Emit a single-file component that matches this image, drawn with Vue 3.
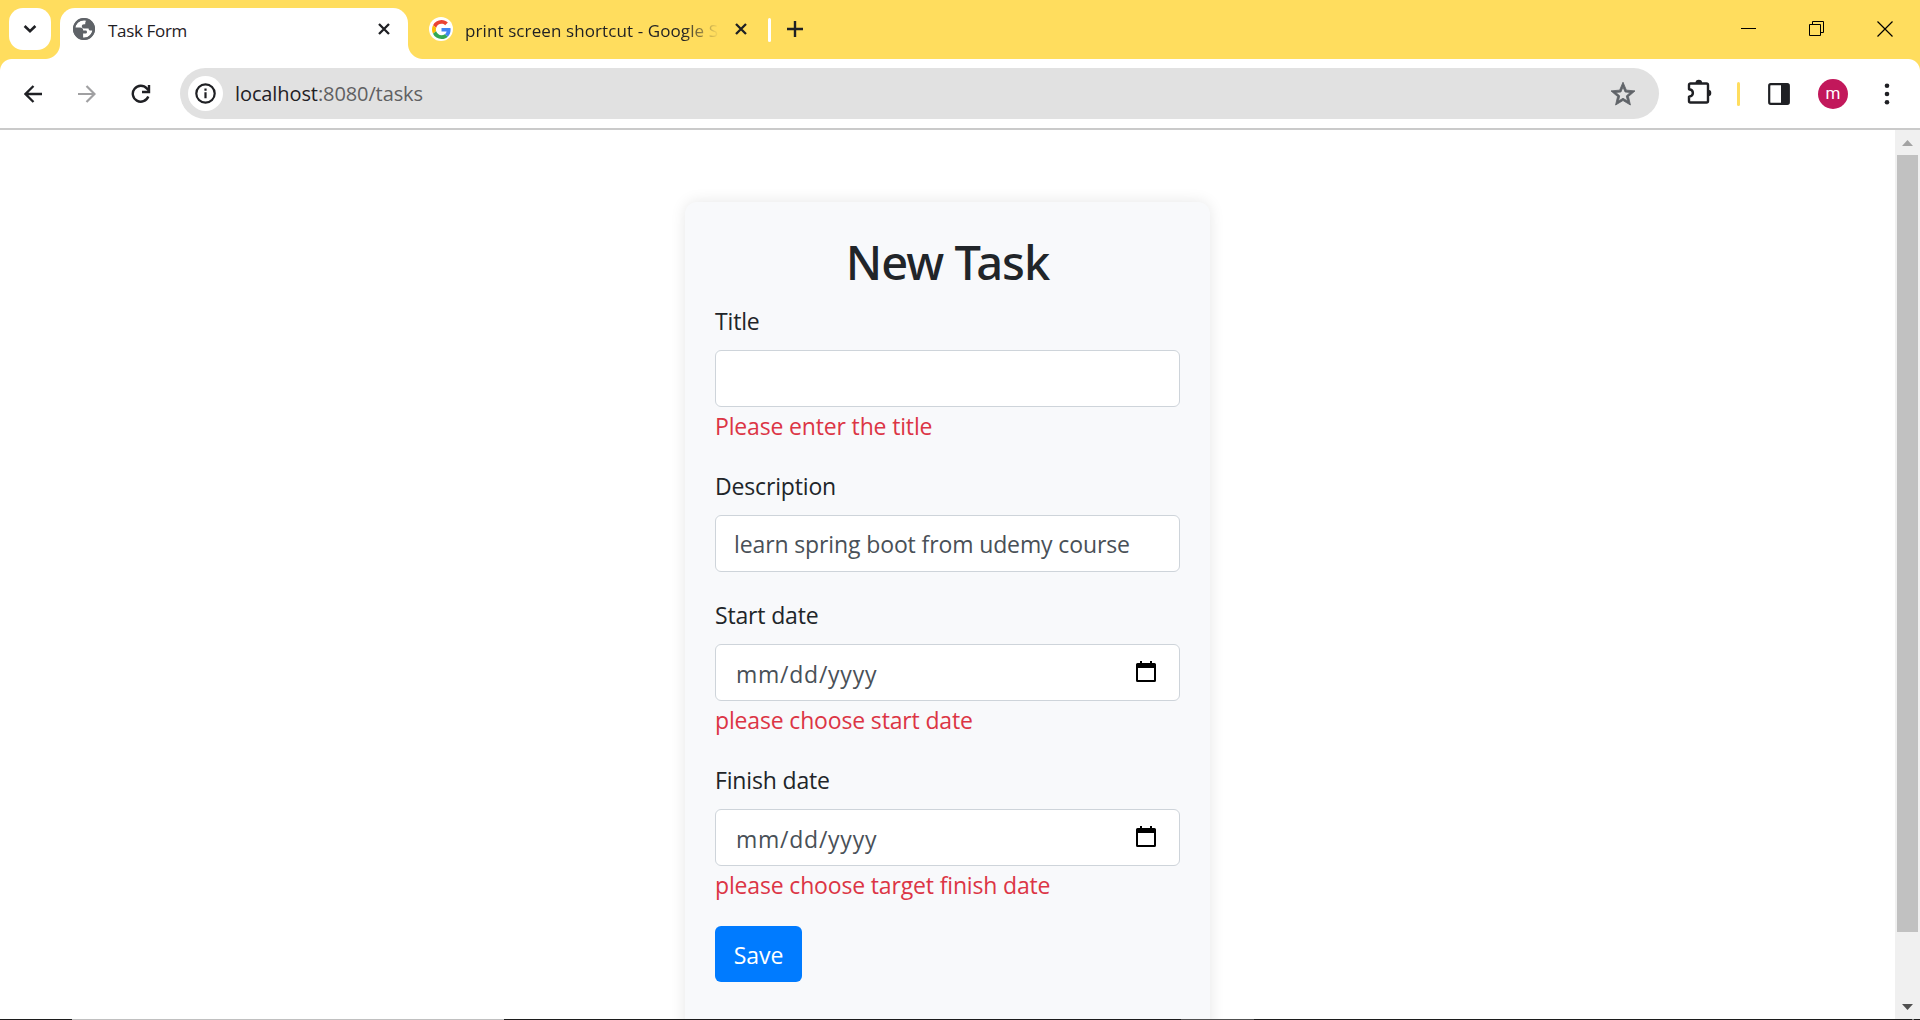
<script setup>
const fields = [
  { id: 'title', label: 'Title', value: '', error: 'Please enter the title' },
  { id: 'description', label: 'Description', value: 'learn spring boot from udemy course' },
  { id: 'start', label: 'Start date', date: true, error: 'please choose start date' },
  { id: 'finish', label: 'Finish date', date: true, error: 'please choose target finish date' },
]
</script>

<template>
  <div class="window">
    <header class="tabstrip">
      <button class="tab-search" aria-label="Search tabs">
        <svg width="14" height="10" viewBox="0 0 14 10"><path d="M1.6 2l5.4 5.2L12.4 2" fill="none" stroke="#1f2024" stroke-width="2.6" /></svg>
      </button>
      <div class="tab active">
        <svg class="globe" width="22" height="22" viewBox="0 0 22 22">
          <circle cx="11" cy="11" r="11" fill="#5f6368" />
          <path d="M12 2.2C6.800 1.900 3 5.200 2.300 9.400L7 9.600c2.200.1 3.200 1.100 3.200 2.800h2.300c1 0 1.500.6 1.500 1.600 0 1.100-.7 1.600-1.700 1.600h-2.200v4.200c4.600.4 8.700-3.200 9.200-7.200h-1.600c-1.400 0-2.100-.8-2.100-2.200H11c-1.400 0-2.200-.7-2.200-2.100S9.600 6.200 11 6.200h1.200c0-2 .4-2.800 1.500-3.600z" fill="#fff" />
          <circle cx="11" cy="11" r="9.900" fill="none" stroke="#5f6368" stroke-width="2.200" />
        </svg>
        <span class="tab-title">Task Form</span>
        <svg class="tab-close" width="12" height="12" viewBox="0 0 12 12"><path d="M1 1l10 10M11 1L1 11" stroke="#1f2024" stroke-width="2.300" /></svg>
      </div>
      <div class="tab second">
        <span class="favicon">
          <svg width="19" height="19" viewBox="0 0 48 48">
            <path fill="#EA4335" d="M24 9.500c3.540 0 6.710 1.220 9.210 3.600l6.850-6.850C35.900 2.380 30.470 0 24 0 14.620 0 6.510 5.380 2.560 13.220l7.980 6.190C12.430 13.720 17.740 9.500 24 9.500z" />
            <path fill="#4285F4" d="M46.980 24.550c0-1.570-.15-3.090-.38-4.550H24v9.020h12.940c-.58 2.960-2.260 5.480-4.780 7.180l7.730 6c4.510-4.180 7.090-10.360 7.090-17.650z" />
            <path fill="#FBBC05" d="M10.530 28.590c-.48-1.450-.76-2.990-.76-4.590s.27-3.140.76-4.590l-7.980-6.190C.92 16.460 0 20.120 0 24c0 3.880.92 7.540 2.560 10.780l7.970-6.190z" />
            <path fill="#34A853" d="M24 48c6.480 0 11.930-2.130 15.890-5.810l-7.730-6c-2.150 1.450-4.920 2.300-8.160 2.300-6.260 0-11.570-4.220-13.470-9.910l-7.980 6.190C6.510 42.620 14.620 48 24 48z" />
          </svg>
        </span>
        <span class="tab-title">print screen shortcut - Google S</span>
        <svg class="tab-close" width="12" height="12" viewBox="0 0 12 12"><path d="M1 1l10 10M11 1L1 11" stroke="#1f2024" stroke-width="2.300" /></svg>
      </div>
      <span class="tab-divider"></span>
      <svg class="new-tab" width="16" height="16" viewBox="0 0 16 16"><path d="M8 0v16M0 8h16" stroke="#1f2024" stroke-width="2.400" /></svg>
      <div class="window-buttons">
        <svg width="15" height="15" viewBox="0 0 15 15"><path d="M0 7.500h15" stroke="#000" /></svg>
        <svg width="15" height="15" viewBox="0 0 15 15"><path d="M.5 3.500h11v11H.5zM3.500 3.500v-3h11v11h-3" fill="none" stroke="#000" /></svg>
        <svg width="16" height="16" viewBox="0 0 16 16"><path d="M.5 .5l15 15M15.500 .5l-15 15" stroke="#000" stroke-width="1.200" /></svg>
      </div>
    </header>

    <nav class="toolbar">
      <svg width="18" height="18" viewBox="0 0 18 18"><path d="M18 9H2M9.500 1L1.500 9l8 8" fill="none" stroke="#1f2024" stroke-width="2.300" /></svg>
      <svg class="forward" width="18" height="18" viewBox="0 0 18 18"><path d="M0 9h16M8.500 1l8 8-8 8" fill="none" stroke="#a0a0a2" stroke-width="2.200" /></svg>
      <svg class="reload" width="20" height="20" viewBox="0 0 20 20">
        <path d="M17.300 12.500A8 8 0 1 1 15.800 4.400L18 6.800" fill="none" stroke="#1f2024" stroke-width="2.400" />
        <path d="M18 1v7h-7" fill="none" stroke="#1f2024" stroke-width="2.400" />
      </svg>
      <div class="omnibox">
        <span class="site-info">
          <svg width="21" height="21" viewBox="0 0 21 21"><circle cx="10.500" cy="10.500" r="9.200" fill="none" stroke="#1f2024" stroke-width="2.200" /><path d="M10.500 9.300v6M10.500 5.400v2.400" stroke="#1f2024" stroke-width="2.200" /></svg>
        </span>
        <span class="url">localhost<i>:8080/tasks</i></span>
        <svg class="star" width="24" height="24" viewBox="0 0 24 24"><path d="M22 9.240l-7.190-.62L12 2 9.190 8.630 2 9.240l5.460 4.730L5.820 21 12 17.270 18.180 21l-1.630-7.030L22 9.240zM12 15.400l-3.760 2.270 1-4.280-3.320-2.880 4.380-.38L12 6.100l1.710 4.040 4.380.38-3.320 2.880 1 4.280L12 15.400z" transform="translate(-2.400 -2.200) scale(1.200)" fill="#5f6368" stroke="#5f6368" stroke-width=".7" /></svg>
      </div>
      <svg class="puzzle" width="26" height="26" viewBox="0 0 26 26">
        <path d="M4.500 4.500h16a1.500 1.500 0 0 1 1.500 1.500v16a1.500 1.500 0 0 1-1.500 1.500h-16A1.500 1.500 0 0 1 3 22v-4.300c5.200-.8 5.200-6.600 0-7.400V6a1.500 1.500 0 0 1 1.500-1.500z" fill="none" stroke="#1f2024" stroke-width="2.400" stroke-linejoin="round" />
        <path d="M9.500 4a3.300 3.300 0 0 1 6.600 0zM22 10.700a3.300 3.300 0 0 1 0 6.600z" fill="#1f2024" />
      </svg>
      <span class="bar-divider"></span>
      <svg class="panel" width="22" height="22" viewBox="0 0 22 22"><rect x="1.200" y="1.200" width="19.600" height="19.600" rx="1.500" fill="none" stroke="#1f2024" stroke-width="2.200" /><path d="M13 1h8v20h-8z" fill="#1f2024" /></svg>
      <span class="avatar">m</span>
      <svg class="dots" width="6" height="22" viewBox="0 0 6 22" fill="#1f2024"><circle cx="3" cy="2.700" r="2.300" /><circle cx="3" cy="11" r="2.300" /><circle cx="3" cy="19.300" r="2.300" /></svg>
    </nav>

    <div class="viewport">
      <main class="page">
        <form class="card" @submit.prevent>
          <h2>New Task</h2>
          <div v-for="f in fields" :key="f.id" class="group">
            <label :for="f.id">{{ f.label }}</label>
            <div v-if="f.date" :id="f.id" class="control date">
              <span>mm/dd/yyyy</span>
              <svg width="20" height="21" viewBox="0 0 20 21"><path d="M4 0h2v2h8V0h2v2h2.500A1.500 1.500 0 0 1 20 3.500v16a1.500 1.500 0 0 1-1.500 1.500h-17A1.500 1.500 0 0 1 0 19.500v-16A1.500 1.500 0 0 1 1.500 2H4zM2 7v12h16V7z" fill="#000" fill-rule="evenodd" /></svg>
            </div>
            <input v-else :id="f.id" class="control" type="text" :value="f.value" />
            <div v-if="f.error" class="error">{{ f.error }}</div>
          </div>
          <button class="save" type="submit">Save</button>
        </form>
      </main>
      <aside class="scrollbar">
        <svg width="11" height="6" viewBox="0 0 11 6"><path d="M0 6l5.500-6L11 6z" fill="#a3a3a3" /></svg>
        <span class="thumb"></span>
        <svg width="11" height="6" viewBox="0 0 11 6"><path d="M0 0h11L5.500 6z" fill="#505050" /></svg>
      </aside>
    </div>

    <footer class="edge">
      <span class="seg light"></span>
      <span class="seg mid"></span>
      <span class="seg end"></span>
    </footer>
  </div>
</template>

<style>
body {
  margin: 0;
  overflow: hidden;
}
</style>

<style scoped>
* {
  box-sizing: border-box;
}
svg {
  display: block;
  flex: none;
}
.window {
  width: 1920px;
  height: 1020px;
  display: flex;
  flex-direction: column;
  overflow: hidden;
  background: #ffdd5e;
  font-family: 'Open Sans', 'Noto Sans', sans-serif;
}
.tabstrip {
  height: 59px;
  flex: none;
  display: flex;
  align-items: flex-start;
  padding: 8px 26px 0 9px;
}
.tab-search {
  width: 42px;
  height: 42px;
  padding: 0;
  border: 0;
  border-radius: 14px;
  background: #fff;
  display: flex;
  align-items: center;
  justify-content: center;
}
.tab {
  height: 42px;
  display: flex;
  align-items: center;
}
.tab.active {
  position: relative;
  width: 348px;
  height: 51px;
  margin-left: 9px;
  padding: 0 18px 9px 13px;
  border-radius: 15px 15px 0 0;
  background: #fff;
}
.tab.active::before,
.tab.active::after {
  content: '';
  position: absolute;
  bottom: 0;
  width: 15px;
  height: 15px;
}
.tab.active::before {
  left: -15px;
  background: radial-gradient(circle at 0 0, transparent 14.5px, #fff 15.5px);
}
.tab.active::after {
  right: -15px;
  background: radial-gradient(circle at 100% 0, transparent 14.5px, #fff 15.5px);
}
.tab-title {
  margin-left: 13px;
  padding-top: 4px;
  font-size: 17px;
  line-height: 24px;
  letter-spacing: -0.33px;
  color: #1f2024;
  white-space: nowrap;
}
.tab-close {
  margin-left: auto;
}
.tab.second {
  width: 318px;
  margin-left: 21px;
}
.second .tab-title {
  width: 254px;
  margin-left: 12px;
  letter-spacing: 0.1px;
  -webkit-mask-image: linear-gradient(90deg, #000 218px, transparent 254px);
  mask-image: linear-gradient(90deg, #000 218px, transparent 254px);
}
.favicon {
  width: 24px;
  height: 24px;
  flex: none;
  border-radius: 50%;
  background: #fff;
  display: flex;
  align-items: center;
  justify-content: center;
}
.tab-divider {
  width: 3px;
  height: 24px;
  margin: 10px 0 0 21px;
  border-radius: 2px;
  background: #fff;
}
.new-tab {
  margin: 13px 0 0 16px;
}
.window-buttons {
  margin: 13px 1px 0 auto;
  display: flex;
  gap: 53px;
}
.toolbar {
  height: 71px;
  flex: none;
  display: flex;
  align-items: center;
  padding: 0 30px 0 24px;
  border-bottom: 2px solid #cacaca;
  background:
    radial-gradient(circle at 12px 12px, #fff 11.5px, #ffdd5e 12.5px) 0 0 / 12px 12px no-repeat,
    radial-gradient(circle at 0 12px, #fff 11.5px, #ffdd5e 12.5px) 100% 0 / 12px 12px no-repeat,
    #fff;
}
.forward {
  margin-left: 36px;
}
.reload {
  margin-left: 35px;
}
.omnibox {
  width: 1479px;
  height: 51px;
  margin-left: 29px;
  padding: 0 24px 0 8px;
  border-radius: 26px;
  background: #e1e1e1;
  display: flex;
  align-items: center;
}
.site-info {
  width: 35px;
  height: 35px;
  border-radius: 50%;
  background: #fff;
  display: flex;
  align-items: center;
  justify-content: center;
}
.url {
  margin-left: 12px;
  font-size: 20px;
  letter-spacing: -0.1px;
  color: #1f2024;
}
.url i {
  font-style: normal;
  color: #5f6062;
}
.star {
  margin-left: auto;
}
.puzzle {
  margin: -3px 0 0 27px;
}
.bar-divider {
  width: 3px;
  height: 24px;
  margin-left: 25px;
  border-radius: 2px;
  background: #ffdd5e;
}
.panel {
  margin-left: 28px;
}
.avatar {
  width: 30px;
  height: 30px;
  margin-left: 28px;
  border-radius: 50%;
  background: #c2185b;
  color: #fff;
  font: 17px/28px Roboto, sans-serif;
  text-align: center;
}
.dots {
  margin-left: 36px;
}
.viewport {
  flex: 1;
  min-height: 0;
  display: flex;
  background: #fff;
}
.page {
  flex: 1;
  min-width: 0;
  padding-top: 72px;
  display: flex;
  justify-content: center;
  align-items: flex-start;
  overflow: hidden;
}
.card {
  width: 525px;
  height: 900px;
  flex: none;
  padding: 30px;
  border-radius: 12px;
  background: #f8f9fb;
  box-shadow: 0 0 15px rgba(0, 0, 0, 0.1);
}
h2 {
  height: 57.6px;
  margin: 0 0 12px;
  padding-top: 2px;
  font: 500 47px/56px 'Noto Sans', 'Open Sans', sans-serif;
  letter-spacing: -1px;
  text-align: center;
  color: #212529;
}
.group {
  margin-bottom: 24px;
}
label,
.error {
  display: block;
  height: 36px;
  padding-top: 2px;
  font-size: 23px;
  line-height: 34px;
  letter-spacing: -0.16px;
  color: #212529;
}
label {
  margin-bottom: 12px;
}
.error {
  color: #dc3545;
}
.control {
  display: flex;
  align-items: center;
  width: 100%;
  height: 57px;
  padding: 2px 18px 0;
  border: 1px solid #ced4da;
  border-radius: 6px;
  background: #fff;
  font: 23px 'Open Sans', 'Noto Sans', sans-serif;
  letter-spacing: -0.12px;
  color: #495057;
}
.date {
  justify-content: space-between;
  padding: 4px 23px 0 20px;
  letter-spacing: 0.75px;
}
.date svg {
  margin-top: -6px;
}
.save {
  width: 87px;
  height: 56px;
  padding: 2px 0 0;
  border: 0;
  border-radius: 6px;
  background: #007bff;
  color: #fff;
  font: 23px 'Open Sans', 'Noto Sans', sans-serif;
  letter-spacing: -0.1px;
}
.scrollbar {
  width: 25px;
  display: flex;
  flex-direction: column;
  align-items: center;
  padding: 10px 0 9px;
  background: #f0f0f0;
}
.thumb {
  width: 21px;
  height: 777px;
  margin: 9px 0 auto;
  background: #c1c1c1;
}
.edge {
  height: 1px;
  flex: none;
  display: flex;
  background: #1c1c1c;
}
.light {
  width: 432px;
  margin-left: 72px;
  background: #c0c0c0;
}
.mid {
  width: 73px;
  margin-left: 677px;
  background: #505050;
}
.end {
  width: 2px;
  margin: 0 6px 0 auto;
  background: #808080;
}
</style>
